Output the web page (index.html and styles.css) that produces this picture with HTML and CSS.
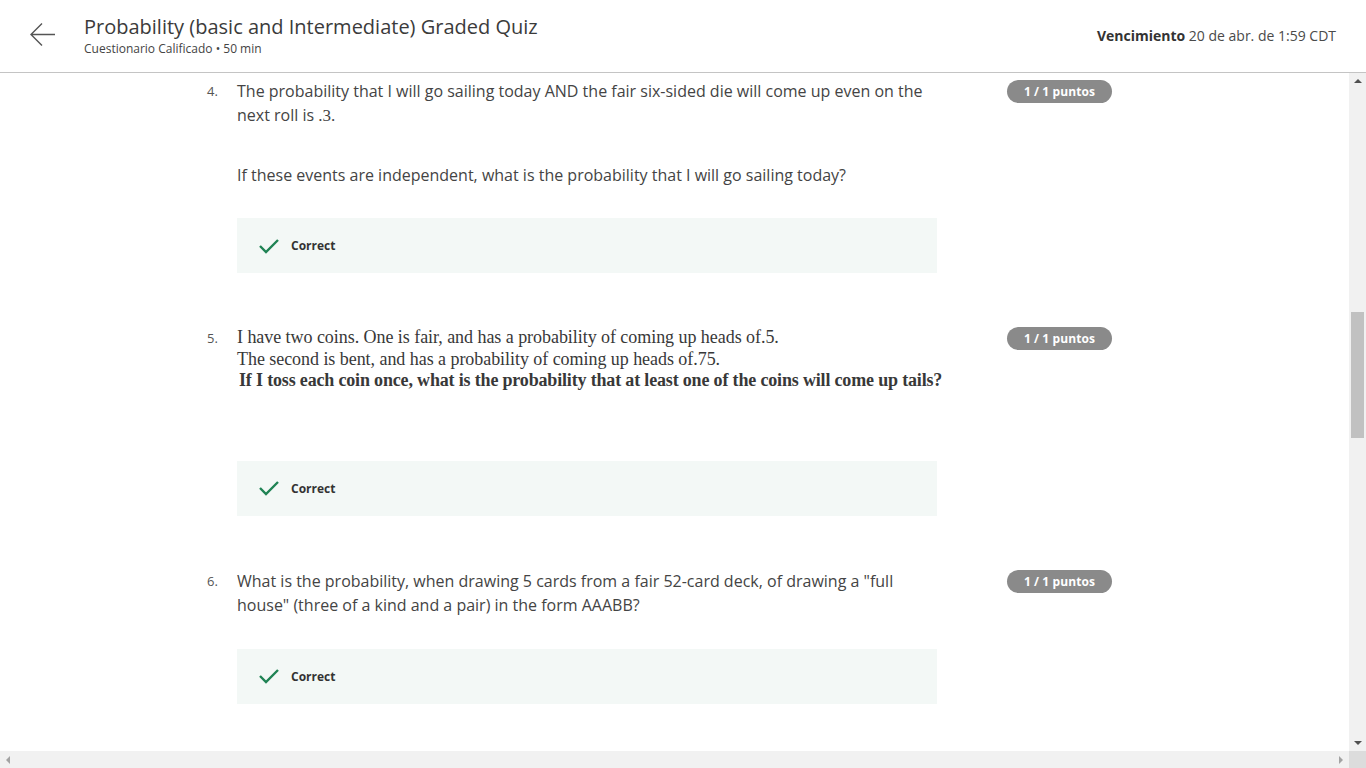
FILE: index.html
```html
<!DOCTYPE html>
<html lang="es">
<head>
<meta charset="utf-8">
<title>Probability (basic and Intermediate) Graded Quiz</title>
<link rel="stylesheet" href="styles.css">
</head>
<body>
<div class="page">
  <header class="header">
    <div class="back">
      <svg width="26" height="26" viewBox="0 0 26 26"><path d="M2 12.5 H26 M13 1.5 L2 12.5 L13 23.5" fill="none" stroke="#555" stroke-width="1.4"/></svg>
    </div>
    <div class="titles">
      <div class="title">Probability (basic and Intermediate) Graded Quiz</div>
      <div class="subtitle">Cuestionario Calificado • 50 min</div>
    </div>
    <div class="due"><b>Vencimiento</b> 20 de abr. de 1:59 CDT</div>
  </header>
  <div class="main">
    <div class="content">
      <div class="question q4">
        <div class="num">4.</div>
        <div class="body">
          <p class="text">The probability that I will go sailing today AND the fair six-sided die will come up even on the next roll is <span class="math">.3.</span></p>
          <p class="text para2">If these events are independent, what is the probability that I will go sailing today?</p>
          <div class="correct"><svg width="24" height="20" viewBox="0 0 24 20"><path d="M3 10 L9 16 L21 4" fill="none" stroke="#1f8354" stroke-width="2.4"/></svg><span>Correct</span></div>
        </div>
        <div class="badge-col"><span class="badge">1 / 1 puntos</span></div>
      </div>

      <div class="question q5">
        <div class="num serifnum">5.</div>
        <div class="body">
          <p class="serif">I have two coins. One is fair, and has a probability of coming up heads of.5.<br>The second is bent, and has a probability of coming up heads of.75.<br><b class="bold">If I toss each coin once, what is the probability that at least one of the coins will come up tails?</b></p>
          <div class="correct c5"><svg width="24" height="20" viewBox="0 0 24 20"><path d="M3 10 L9 16 L21 4" fill="none" stroke="#1f8354" stroke-width="2.4"/></svg><span>Correct</span></div>
        </div>
        <div class="badge-col"><span class="badge">1 / 1 puntos</span></div>
      </div>

      <div class="question q6">
        <div class="num">6.</div>
        <div class="body">
          <p class="text">What is the probability, when drawing 5 cards from a fair 52-card deck, of drawing a "full house" (three of a kind and a pair) in the form AAABB?</p>
          <div class="correct"><svg width="24" height="20" viewBox="0 0 24 20"><path d="M3 10 L9 16 L21 4" fill="none" stroke="#1f8354" stroke-width="2.4"/></svg><span>Correct</span></div>
        </div>
        <div class="badge-col"><span class="badge">1 / 1 puntos</span></div>
      </div>
    </div>
    <div class="vscroll">
      <div class="arrow-up"></div>
      <div class="vtrack"><div class="vthumb"></div></div>
      <div class="arrow-down"></div>
    </div>
  </div>
  <div class="hscroll">
    <div class="htrack">
      <div class="arrow-left"></div>
      <div class="arrow-right"></div>
    </div>
    <div class="corner"></div>
  </div>
</div>
</body>
</html>
```
FILE: styles.css
```css
* { box-sizing: border-box; }
html, body { margin: 0; padding: 0; height: 100%; overflow: hidden; }
body { font-family: "Open Sans", "Liberation Sans", sans-serif; color: #3d3d3d; background: #fff; }
.page { display: flex; flex-direction: column; height: 100vh; }

.header { height: 73px; flex: none; display: flex; align-items: flex-start; border-bottom: 1px solid #c4c4c4; background: #fff; }
.back { width: 84px; padding: 22px 0 0 29px; }
.back svg { display: block; }
.titles { flex: 1; padding-top: 13px; }
.title { font-size: 20px; line-height: 28px; color: #3b3b3b; }
.subtitle { font-size: 12px; line-height: 15px; color: #444; }
.due { padding: 26px 30px 0 0; font-size: 14px; line-height: 20px; color: #4a4a4a; }
.due b { color: #333; font-weight: 700; }

.main { flex: 1; display: flex; min-height: 0; }
.content { flex: 1; overflow: hidden; padding: 6px 0 0 0; }

.question { display: flex; padding-left: 207px; }
.num { width: 30px; font-size: 13px; line-height: 24px; color: #555; }
.body { width: 700px; }
.badge-col { margin-left: 70px; }
.badge { display: inline-block; width: 105px; height: 23px; border-radius: 12px; background: #8a8a8a; color: #fff; font-size: 12px; font-weight: 700; text-align: center; line-height: 23px; letter-spacing: 0.1px; }

.text { margin: 0; font-size: 16px; line-height: 24px; color: #444; }
.math { font-family: "Liberation Serif", serif; font-size: 17px; line-height: 1; }
.para2 { margin-top: 36px; }

.correct { margin-top: 31px; height: 55px; background: #f3f8f6; display: flex; align-items: center; padding-left: 20px; }
.correct svg { display: block; margin-right: 10px; }
.correct span { font-size: 12px; font-weight: 700; color: #333; }

.q5 { margin-top: 53px; }
.serifnum { line-height: 22px; padding-top: 1px; }
.serif { margin: 0; padding-top: 1px; font-family: "Liberation Serif", serif; font-size: 18px; line-height: 21.5px; color: #383838; letter-spacing: -0.05px; }
.bold { display: inline-block; margin-left: 2px; font-weight: 700; letter-spacing: -0.17px; white-space: nowrap; }
.c5 { margin-top: 69px; }

.q6 { margin-top: 53px; }
.q6 .correct { margin-top: 32px; }

.vscroll { width: 17px; flex: none; background: #f1f1f1; display: flex; flex-direction: column; align-items: center; }
.arrow-up { margin-top: 6px; width: 0; height: 0; border-left: 4px solid transparent; border-right: 4px solid transparent; border-bottom: 4px solid #505050; }
.vtrack { flex: 1; width: 100%; padding-top: 229px; display: flex; justify-content: center; }
.vthumb { width: 13px; height: 126px; background: #c1c1c1; }
.arrow-down { margin-bottom: 6px; width: 0; height: 0; border-left: 4px solid transparent; border-right: 4px solid transparent; border-top: 4px solid #505050; }

.hscroll { height: 17px; flex: none; display: flex; }
.htrack { flex: 1; background: #f1f1f1; display: flex; justify-content: space-between; align-items: center; padding: 0 6px; }
.arrow-left { width: 0; height: 0; border-top: 4px solid transparent; border-bottom: 4px solid transparent; border-right: 4px solid #a3a3a3; }
.arrow-right { width: 0; height: 0; border-top: 4px solid transparent; border-bottom: 4px solid transparent; border-left: 4px solid #a3a3a3; }
.corner { width: 17px; background: #dcdcdc; }
```
